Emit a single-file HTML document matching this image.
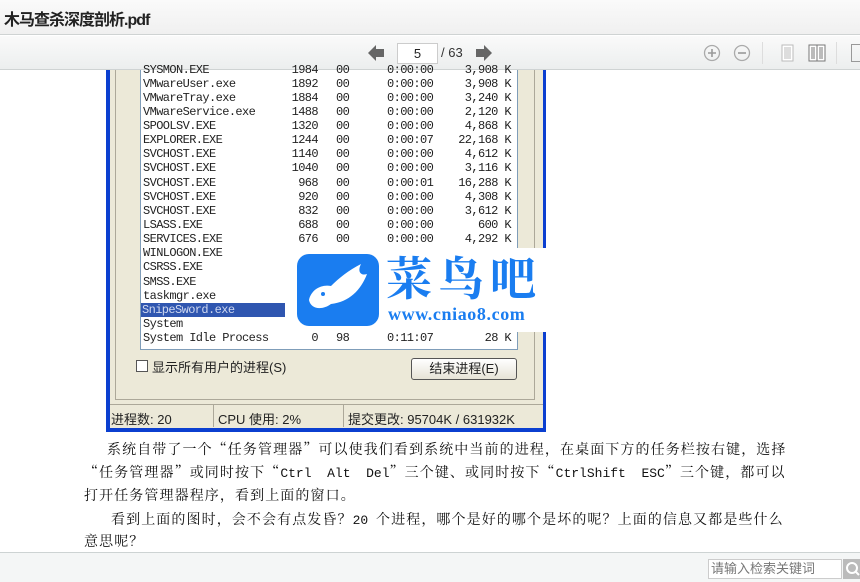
<!DOCTYPE html>
<html lang="zh-CN"><head><meta charset="utf-8"><style>
*{margin:0;padding:0;box-sizing:border-box}
body{width:860px;height:582px;overflow:hidden;background:#fff;position:relative;font-family:"Liberation Sans","Noto Sans CJK SC",sans-serif}
.abs{position:absolute}
#title{left:0;top:0;width:860px;height:35px;background:linear-gradient(#fafafa,#f0f0f0);border-bottom:1px solid #cfd3d3}
#title span{position:absolute;left:4px;top:6px;font-size:16px;font-weight:bold;color:#222;letter-spacing:-1px}
#tb{left:0;top:36px;width:860px;height:34px;background:linear-gradient(#fafafa,#eceeee);border-bottom:1px solid #cfd3d3}
#content{left:0;top:70px;width:860px;height:482px;background:#fff}
#bot{left:0;top:552px;width:860px;height:30px;background:#f4f6f6;border-top:1px solid #cdd3d3}
.mono{font-family:"Liberation Mono","Noto Sans CJK SC",monospace;font-size:12px;color:#222;white-space:pre;letter-spacing:-0.6px}
.row{position:absolute;left:0;width:380px;height:14px;line-height:14px}
.row span{position:absolute;top:0}
.n{left:0}.p{right:205px;text-align:right}.c{left:193px}.tm{left:244px}.m{right:12px;text-align:right}
p.t{position:absolute;font-family:"Noto Serif CJK SC","Liberation Serif",serif;font-size:14px;letter-spacing:1.1px;color:#111;white-space:nowrap;line-height:20px}
p.t i{font-style:normal;font-family:"Liberation Mono",monospace;font-size:13px;letter-spacing:0;white-space:pre}
</style></head><body>
<div id="title" class="abs"><span>木马查杀深度剖析.pdf</span></div>
<div id="tb" class="abs">
 <svg class="abs" style="left:366px;top:8px" width="20" height="18"><path d="M2 9 L10 1 L10 5 L18 5 L18 13 L10 13 L10 17Z" fill="#666"/></svg>
 <div class="abs" style="left:397px;top:7px;width:41px;height:21px;background:#fff;border:1px solid #ccc;font-size:13px;line-height:19px;text-align:center;color:#222">5</div>
 <div class="abs" style="left:441px;top:9px;font-size:13px;color:#333">/ 63</div>
 <svg class="abs" style="left:474px;top:8px" width="20" height="18"><path d="M18 9 L10 1 L10 5 L2 5 L2 13 L10 13 L10 17Z" fill="#666"/></svg>
 <svg class="abs" style="left:703px;top:8px" width="18" height="18"><circle cx="9" cy="9" r="7.5" fill="none" stroke="#aaa" stroke-width="1.3"/><path d="M5 9H13M9 5V13" stroke="#999" stroke-width="1.6"/></svg>
 <svg class="abs" style="left:733px;top:8px" width="18" height="18"><circle cx="9" cy="9" r="7.5" fill="none" stroke="#aaa" stroke-width="1.3"/><path d="M5 9H13" stroke="#999" stroke-width="1.6"/></svg>
 <div class="abs" style="left:762px;top:6px;width:1px;height:22px;background:#ddd"></div>
 <svg class="abs" style="left:781px;top:8px" width="14" height="18"><rect x="1" y="1" width="11" height="16" fill="#fff" stroke="#bbb"/><path d="M3 4H10M3 6H10M3 8H10M3 10H10M3 12H10M3 14H10" stroke="#bbb"/></svg>
 <svg class="abs" style="left:808px;top:8px" width="18" height="18"><rect x="1" y="1" width="16" height="16" fill="#fff" stroke="#777"/><path d="M9 1V17M3 4H7M3 6H7M3 8H7M3 10H7M3 12H7M3 14H7M11 4H15M11 6H15M11 8H15M11 10H15M11 12H15M11 14H15" stroke="#777"/></svg>
 <div class="abs" style="left:836px;top:6px;width:1px;height:22px;background:#ddd"></div>
 <div class="abs" style="left:851px;top:8px;width:9px;height:18px;border:1.5px solid #999;border-right:none"></div>
</div>
<div id="content" class="abs">
 <div class="abs" style="left:106px;top:0;width:440px;height:362px;background:#0b3fd0"></div>
 <div class="abs" style="left:110px;top:0;width:433px;height:358px;background:#ece9d8"></div>
 <div class="abs" style="left:115px;top:0;width:420px;height:330px;border:1px solid #aca899;border-top:none"></div>
 <div class="abs" style="left:140px;top:0;width:378px;height:280px;background:#fff;border:1px solid #7f9db9;border-top:none"></div>
 <div class="abs mono" style="left:143px;top:0;width:380px;height:280px">
  <div class="row" style="top:-7px"><span class="n">SYSMON.EXE</span><span class="p">1984</span><span class="c">00</span><span class="tm">0:00:00</span><span class="m">3,908 K</span></div>
  <div class="row" style="top:7px"><span class="n">VMwareUser.exe</span><span class="p">1892</span><span class="c">00</span><span class="tm">0:00:00</span><span class="m">3,908 K</span></div>
  <div class="row" style="top:21px"><span class="n">VMwareTray.exe</span><span class="p">1884</span><span class="c">00</span><span class="tm">0:00:00</span><span class="m">3,240 K</span></div>
  <div class="row" style="top:35px"><span class="n">VMwareService.exe</span><span class="p">1488</span><span class="c">00</span><span class="tm">0:00:00</span><span class="m">2,120 K</span></div>
  <div class="row" style="top:49px"><span class="n">SPOOLSV.EXE</span><span class="p">1320</span><span class="c">00</span><span class="tm">0:00:00</span><span class="m">4,868 K</span></div>
  <div class="row" style="top:63px"><span class="n">EXPLORER.EXE</span><span class="p">1244</span><span class="c">00</span><span class="tm">0:00:07</span><span class="m">22,168 K</span></div>
  <div class="row" style="top:77px"><span class="n">SVCHOST.EXE</span><span class="p">1140</span><span class="c">00</span><span class="tm">0:00:00</span><span class="m">4,612 K</span></div>
  <div class="row" style="top:91px"><span class="n">SVCHOST.EXE</span><span class="p">1040</span><span class="c">00</span><span class="tm">0:00:00</span><span class="m">3,116 K</span></div>
  <div class="row" style="top:106px"><span class="n">SVCHOST.EXE</span><span class="p">968</span><span class="c">00</span><span class="tm">0:00:01</span><span class="m">16,288 K</span></div>
  <div class="row" style="top:120px"><span class="n">SVCHOST.EXE</span><span class="p">920</span><span class="c">00</span><span class="tm">0:00:00</span><span class="m">4,308 K</span></div>
  <div class="row" style="top:134px"><span class="n">SVCHOST.EXE</span><span class="p">832</span><span class="c">00</span><span class="tm">0:00:00</span><span class="m">3,612 K</span></div>
  <div class="row" style="top:148px"><span class="n">LSASS.EXE</span><span class="p">688</span><span class="c">00</span><span class="tm">0:00:00</span><span class="m">600 K</span></div>
  <div class="row" style="top:162px"><span class="n">SERVICES.EXE</span><span class="p">676</span><span class="c">00</span><span class="tm">0:00:00</span><span class="m">4,292 K</span></div>
  <div class="row" style="top:176px"><span class="n">WINLOGON.EXE</span></div>
  <div class="row" style="top:190px"><span class="n">CSRSS.EXE</span></div>
  <div class="row" style="top:205px"><span class="n">SMSS.EXE</span></div>
  <div class="row" style="top:219px"><span class="n">taskmgr.exe</span></div>
  <div class="row" style="top:233px;left:-2px;width:144px;background:#2f56b0;color:#cfd8f0"><span class="n" style="left:1px">SnipeSword.exe</span></div>
  <div class="row" style="top:247px"><span class="n">System</span></div>
  <div class="row" style="top:261px"><span class="n">System Idle Process</span><span class="p">0</span><span class="c">98</span><span class="tm">0:11:07</span><span class="m">28 K</span></div>
 </div>
 <div class="abs" style="left:136px;top:290px;width:12px;height:12px;border:1px solid #555;background:#fff"></div>
 <div class="abs" style="left:152px;top:287px;font-size:13px;color:#222">显示所有用户的进程(S)</div>
 <div class="abs" style="left:411px;top:288px;width:106px;height:22px;border:1px solid #555;border-radius:3px;background:linear-gradient(#fff,#e6e3d6);font-size:13px;text-align:center;line-height:20px;color:#222">结束进程(E)</div>
 <div class="abs" style="left:110px;top:334px;width:433px;height:24px;border-top:1px solid #aca899"></div>
 <div class="abs" style="left:213px;top:335px;width:1px;height:22px;background:#aca899"></div>
 <div class="abs" style="left:343px;top:335px;width:1px;height:22px;background:#aca899"></div>
 <div class="abs" style="left:111px;top:339px;font-size:13px;color:#222;white-space:pre">进程数: 20</div>
 <div class="abs" style="left:218px;top:339px;font-size:13px;color:#222;white-space:pre">CPU 使用: 2%</div>
 <div class="abs" style="left:348px;top:339px;font-size:13px;color:#222;white-space:pre">提交更改: 95704K / 631932K</div>
 <div class="abs" style="left:293px;top:178px;width:274px;height:84px;background:#fff"></div>
 <div class="abs" style="left:297px;top:184px;width:82px;height:72px;border-radius:12px;background:#1a7df0"></div>
 <svg class="abs" style="left:297px;top:184px" width="82" height="72"><path d="M12 46 C14 36 24 30 34 32 C42 24 52 16 64 10 C60 18 64 22 70 20 C64 36 52 48 34 50 C26 56 14 56 12 46Z" fill="#fff"/><circle cx="26" cy="40" r="2" fill="#1a7df0"/></svg>
 <div class="abs" style="left:386px;top:180px;font-size:46px;font-weight:bold;color:#1a7df0;letter-spacing:6px;line-height:52px;font-family:'Noto Serif CJK SC',serif">菜鸟吧</div>
 <div class="abs" style="left:388px;top:234px;font-size:18px;font-weight:bold;color:#1a7df0;font-family:'Liberation Serif',serif;letter-spacing:0.6px">www.cniao8.com</div>
 <p class="t" style="left:107px;top:369px">系统自带了一个“任务管理器”可以使我们看到系统中当前的进程，在桌面下方的任务栏按右键，选择</p>
 <p class="t" style="left:84px;top:392px">“任务管理器”或同时按下“<i>Ctrl  Alt  Del</i>”三个键、或同时按下“<i>CtrlShift  ESC</i>”三个键，都可以</p>
 <p class="t" style="left:84px;top:415px">打开任务管理器程序，看到上面的窗口。</p>
 <p class="t" style="left:111px;top:439px">看到上面的图时，会不会有点发昏？<i>20 </i>个进程，哪个是好的哪个是坏的呢？上面的信息又都是些什么</p>
 <p class="t" style="left:84px;top:461px">意思呢？</p>
</div>
<div id="bot" class="abs">
 <div class="abs" style="left:708px;top:6px;width:134px;height:20px;background:#fff;border:1px solid #ccc;font-size:13px;line-height:18px;color:#777;padding-left:2px">请输入检索关键词</div>
 <div class="abs" style="left:843px;top:6px;width:17px;height:20px;background:#bbb"></div>
 <svg class="abs" style="left:845px;top:8px" width="15" height="16"><circle cx="7" cy="7" r="5" fill="none" stroke="#fff" stroke-width="2"/><path d="M11 11L14 14" stroke="#fff" stroke-width="2"/></svg>
</div>
</body></html>
